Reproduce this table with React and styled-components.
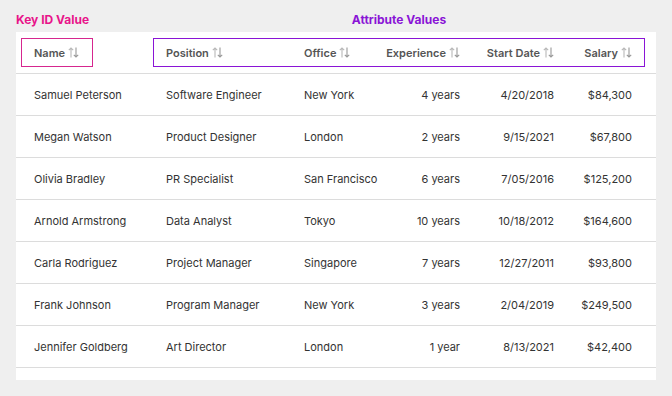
// NPM
import React from 'react';
import styled, { createGlobalStyle } from 'styled-components';

// DATA
const rows = [
  ['Samuel Peterson', 'Software Engineer', 'New York', '4 years', '4/20/2018', '$84,300'],
  ['Megan Watson', 'Product Designer', 'London', '2 years', '9/15/2021', '$67,800'],
  ['Olivia Bradley', 'PR Specialist', 'San Francisco', '6 years', '7/05/2016', '$125,200'],
  ['Arnold Armstrong', 'Data Analyst', 'Tokyo', '10 years', '10/18/2012', '$164,600'],
  ['Carla Rodriguez', 'Project Manager', 'Singapore', '7 years', '12/27/2011', '$93,800'],
  ['Frank Johnson', 'Program Manager', 'New York', '3 years', '2/04/2019', '$249,500'],
  ['Jennifer Goldberg', 'Art Director', 'London', '1 year', '8/13/2021', '$42,400'],
];

const attrCols = [
  { label: 'Position', width: 138, right: false },
  { label: 'Office', width: 82, right: false },
  { label: 'Experience', width: 74, right: true },
  { label: 'Start Date', width: 94, right: true },
  { label: 'Salary', width: 78, right: true },
];

// STYLES
const GlobalStyle = createGlobalStyle`
  body {
    margin: 0;
    background: #efefef;
    font-family: Inter, "Liberation Sans", sans-serif;
  }
`;

const Page = styled.div`
  width: 672px;
  height: 396px;
  padding: 0 16px;
  box-sizing: border-box;
`;

const Labels = styled.div`
  display: flex;
  height: 32px;
  align-items: flex-end;
  padding-bottom: 5px;
  box-sizing: border-box;
`;

const Label = styled.div`
  font-size: 12px;
  font-weight: 700;
  color: ${(p) => p.color};
  width: ${(p) => p.width}px;
  text-align: ${(p) => (p.center ? 'center' : 'left')};
  margin-left: ${(p) => p.offset || 0}px;
`;

const Card = styled.div`
  background: #fff;
  padding-bottom: 12px;
`;

const HeadRow = styled.div`
  display: flex;
  align-items: center;
  height: 42px;
  box-sizing: border-box;
  padding-left: 5px;
  border-bottom: 1px solid #dcdcdc;
`;

const Group = styled.div`
  display: flex;
  align-items: center;
  height: 29px;
  box-sizing: border-box;
  border: 1.5px solid ${(p) => p.color};
  padding-left: 12px;
  width: ${(p) => p.width}px;
  margin-left: ${(p) => p.offset || 0}px;
`;

const HeadCell = styled.div`
  display: flex;
  align-items: center;
  justify-content: ${(p) => (p.right ? 'flex-end' : 'flex-start')};
  gap: 3px;
  flex-shrink: 0;
  width: ${(p) => p.width}px;
  font-size: 11px;
  font-weight: 600;
  color: #555;
  white-space: nowrap;

  svg {
    flex-shrink: 0;
  }
`;

const Row = styled.div`
  display: flex;
  align-items: center;
  height: 42px;
  box-sizing: border-box;
  padding-left: 18px;
  border-bottom: 1px solid #dcdcdc;
`;

const Cell = styled.div`
  flex-shrink: 0;
  width: ${(p) => p.width}px;
  text-align: ${(p) => (p.right ? 'right' : 'left')};
  font-size: 11px;
  color: #333;
  white-space: nowrap;
`;

// MODULE
function SortIcon() {
  return (
    <svg width="11" height="11" viewBox="0 0 11 11" fill="none" strokeWidth="1.1">
      <path d="M3 10.5V1M0.8 3.2L3 1L5.2 3.2" stroke="#b8b8b8" />
      <path d="M8 0.5V10M5.8 7.8L8 10L10.2 7.8" stroke="#999" />
    </svg>
  );
}

export default function App() {
  return (
    <Page>
      <GlobalStyle />
      <Labels>
        <Label color="#e8158a" width={130}>Key ID Value</Label>
        <Label color="#8a14d6" width={492} offset={7} center>
          Attribute Values
        </Label>
      </Labels>
      <Card>
        <HeadRow>
          <Group color="#d6268f" width={72}>
            <HeadCell>
              Name <SortIcon />
            </HeadCell>
          </Group>
          <Group color="#8a14d6" width={492} offset={60}>
            {attrCols.map((c) => (
              <HeadCell key={c.label} width={c.width} right={c.right}>
                {c.label} <SortIcon />
              </HeadCell>
            ))}
          </Group>
        </HeadRow>
        {rows.map((r) => (
          <Row key={r[0]}>
            <Cell width={132}>{r[0]}</Cell>
            {attrCols.map((c, i) => (
              <Cell key={c.label} width={c.width} right={c.right}>
                {r[i + 1]}
              </Cell>
            ))}
          </Row>
        ))}
      </Card>
    </Page>
  );
}
